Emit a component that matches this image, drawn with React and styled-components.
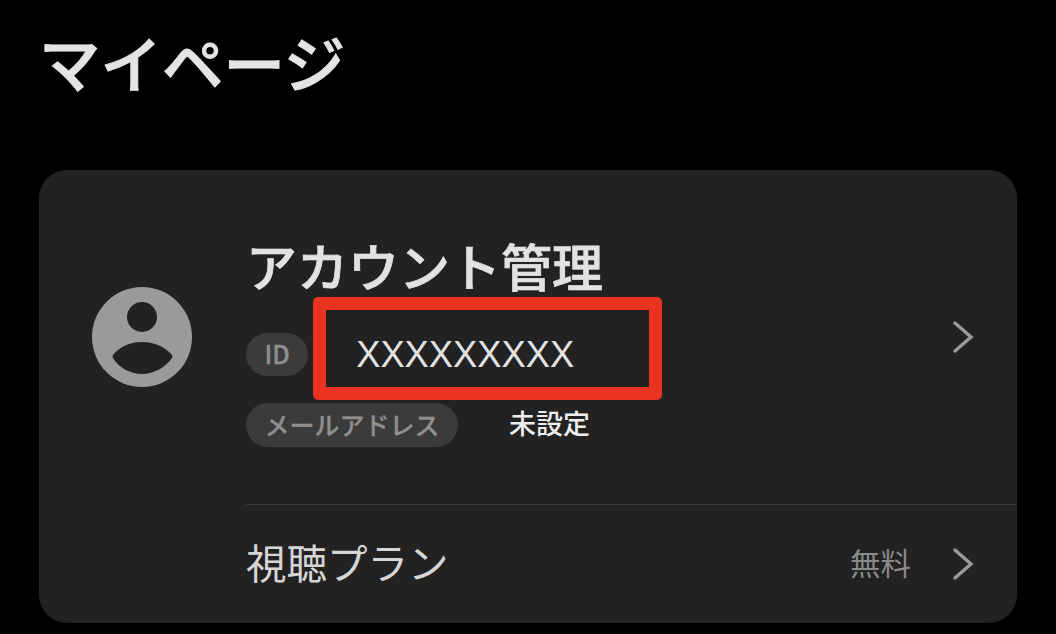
import React from 'react';
import styled, { createGlobalStyle } from 'styled-components';

const GlobalStyle = createGlobalStyle`
  html, body { margin: 0; padding: 0; background: #000; }
  body { width: 1056px; height: 634px; overflow: hidden; font-family: "Noto Sans CJK JP", "Noto Sans", sans-serif; }
`;

const Page = styled.div`
  width: 1056px;
  height: 634px;
  padding: 22px 39px 0 39px;
  box-sizing: border-box;
  background: #000;
`;

const Title = styled.h1`
  margin: 0;
  height: 148px;
  font-size: 61.5px;
  line-height: 80px;
  font-weight: 500;
  color: #e4e4e4;
  -webkit-text-stroke: 1px #e4e4e4;
`;

const Card = styled.section`
  width: 978px;
  height: 453px;
  border-radius: 28px;
  background: #222;
  overflow: hidden;
`;

const AccountRow = styled.div`
  display: flex;
  align-items: center;
  height: 334px;
  padding: 0 42px 0 53px;
  box-sizing: border-box;
`;

const Avatar = styled.svg`
  width: 100px;
  height: 100px;
  flex: none;
  margin-right: 54px;
`;

const Info = styled.div`
  flex: 1;
  align-self: stretch;
  display: flex;
  flex-direction: column;
  padding-top: 63px;
`;

const Name = styled.div`
  font-size: 51px;
  line-height: 64px;
  font-weight: 500;
  color: #e2e2e2;
  -webkit-text-stroke: 0.7px #e2e2e2;
  margin-bottom: 27px;
`;

const Line = styled.div`
  display: flex;
  align-items: center;
  height: 60px;
  margin-bottom: 11px;
`;

const Tag = styled.span`
  display: inline-flex;
  align-items: center;
  justify-content: center;
  height: ${p => p.$h}px;
  padding: 0 18.5px 3px;
  box-sizing: border-box;
  border-radius: 22px;
  background: #3b3b3b;
  color: #8f8f8f;
  font-size: 25px;
  font-weight: 500;
  -webkit-text-stroke: 0.3px #8f8f8f;
`;

const IdBox = styled.div`
  display: flex;
  align-items: center;
  flex: none;
  width: 349px;
  height: 103px;
  margin: 0 0 11px 5px;
  padding: 13px 0 0 30px;
  box-sizing: border-box;
  border: 13px solid #ea3323;
  border-radius: 5px;
  color: #e2e2e2;
  font-family: "Liberation Sans", Arial, sans-serif;
  font-size: 36.3px;
`;

const Unset = styled.span`
  margin: 0 0 5px 51px;
  color: #eeeeee;
  font-size: 27px;
  font-weight: 500;
`;

const Chevron = styled.svg`
  width: 24px;
  height: 36px;
  flex: none;
  fill: none;
  stroke: #9a9a9a;
  stroke-width: 3.4;
  stroke-linecap: round;
`;

const PlanRow = styled.div`
  display: flex;
  align-items: center;
  height: 118px;
  margin-left: 207px;
  padding-right: 42px;
  border-top: 1px solid #3a3a3a;
`;

const PlanLabel = styled.div`
  flex: 1;
  margin-bottom: 5px;
  font-size: 40.5px;
  color: #d6d6d6;
`;

const PlanValue = styled.div`
  margin: 0 40px 5px 0;
  font-size: 30.5px;
  color: #8a8a8a;
`;

const Arrow = () => (
  <Chevron viewBox="0 0 24 36">
    <path d="M4 4 L20 18 L4 32" />
  </Chevron>
);

export default function App() {
  return (
    <>
      <GlobalStyle />
      <Page>
        <Title>マイページ</Title>
        <Card>
          <AccountRow>
            <Avatar viewBox="0 0 100 100">
              <circle cx="50" cy="50" r="50" fill="#9a9a9a" />
              <circle cx="50" cy="30" r="15" fill="#222" />
              <path d="M50 55 C65 55 75 62 80 68 Q81 70 80 71 C74 80 62 87 50 87 C38 87 26 80 21 71 Q20 70 21 68 C26 62 35 55 50 55 Z" fill="#222" />
            </Avatar>
            <Info>
              <Name>アカウント管理</Name>
              <Line>
                <Tag $h={43}>ID</Tag>
                <IdBox>XXXXXXXXX</IdBox>
              </Line>
              <Line>
                <Tag $h={44}>メールアドレス</Tag>
                <Unset>未設定</Unset>
              </Line>
            </Info>
            <Arrow />
          </AccountRow>
          <PlanRow>
            <PlanLabel>視聴プラン</PlanLabel>
            <PlanValue>無料</PlanValue>
            <Arrow />
          </PlanRow>
        </Card>
      </Page>
    </>
  );
}
